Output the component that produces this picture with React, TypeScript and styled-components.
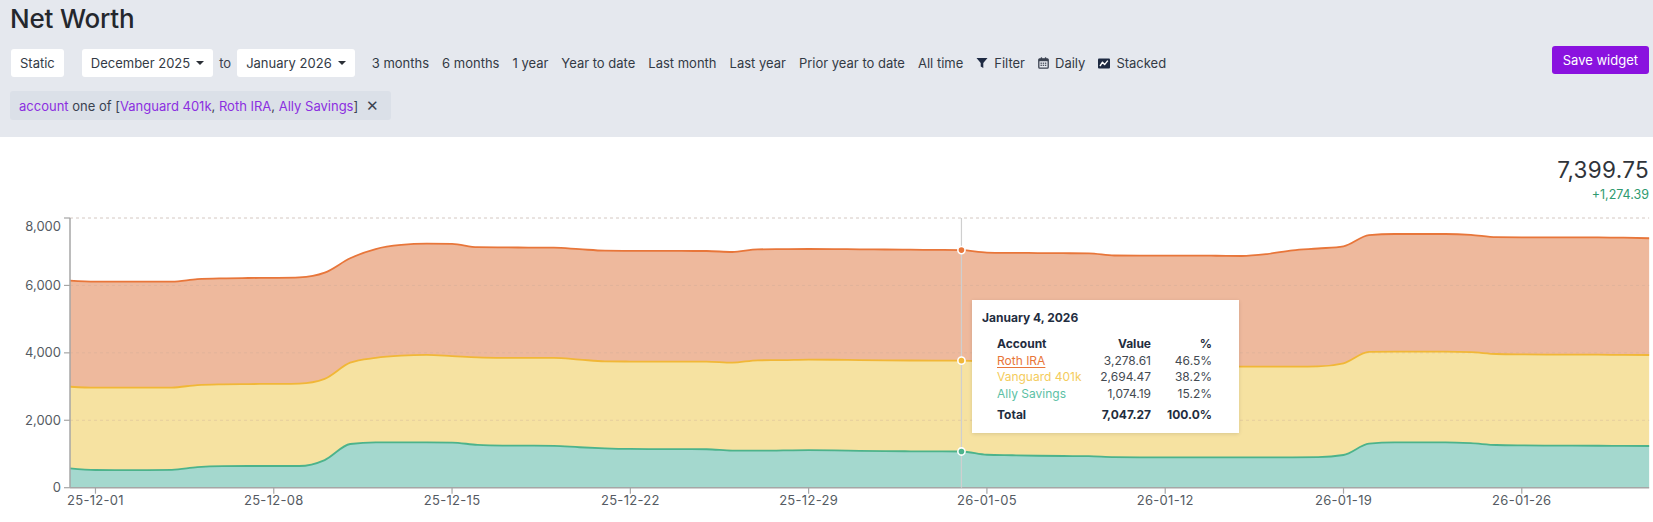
import React from "react";
import styled, { createGlobalStyle } from "styled-components";

const GlobalStyle = createGlobalStyle`
  html, body { margin: 0; padding: 0; background: #ffffff; }
  body { font-family: Inter, "Noto Sans", "Liberation Sans", sans-serif; color: #2f3540; }
  * { box-sizing: border-box; }
`;

const Page = styled.div`
  width: 1653px;
  overflow: hidden;
`;

const Header = styled.header`
  height: 137px;
  background: #e5e8ee;
  padding: 3px 4px 0 10px;
  display: flex;
  flex-direction: column;
`;

const Title = styled.h1`
  margin: 0;
  font-size: 26px;
  line-height: 32px;
  font-weight: 500;
  color: #24272d;
  letter-spacing: -0.2px;
`;

const Toolbar = styled.div`
  margin-top: 14px;
  height: 28px;
  display: flex;
  align-items: center;
  gap: 13px;
`;

const Button = styled.button<{ $pad?: number }>`
  height: 28px;
  border: none;
  border-radius: 3px;
  background: #ffffff;
  padding: 0 ${(p) => p.$pad ?? 9}px;
  font-family: inherit;
  font-size: 13px;
  color: #333a45;
  display: inline-flex;
  align-items: center;
  gap: 6px;
  cursor: pointer;
`;

const Caret = styled.span`
  width: 0;
  height: 0;
  border-left: 4px solid transparent;
  border-right: 4px solid transparent;
  border-top: 4px solid #2b2f36;
`;

const RangeGroup = styled.div`
  display: flex;
  align-items: center;
  gap: 6px;
  margin-left: 5px;
  margin-right: 4px;
`;

const Plain = styled.span`
  font-size: 13px;
  color: #3a4250;
  white-space: nowrap;
`;

const Link = styled.span`
  font-size: 13px;
  color: #333a45;
  white-space: nowrap;
  display: inline-flex;
  align-items: center;
  gap: 6px;
  cursor: pointer;
`;

const SaveButton = styled.button`
  margin-left: auto;
  margin-top: -6px;
  height: 28px;
  padding: 0 11px;
  border: none;
  border-radius: 3px;
  background: #8a12df;
  color: #ffffff;
  font-family: inherit;
  font-size: 13px;
  cursor: pointer;
`;

const Chip = styled.div`
  margin-top: 14px;
  align-self: flex-start;
  height: 29px;
  width: 381px;
  display: flex;
  align-items: center;
  padding: 0 9px 0 9px;
  background: #dbe0e8;
  border-radius: 3px;
  font-size: 13px;
  color: #3a4250;
  white-space: nowrap;
`;

const Purple = styled.span`
  color: #8b2fe0;
`;

const ChipClose = styled.span`
  margin-left: auto;
  font-size: 15px;
  color: #3a4250;
  padding-right: 3px;
`;

const ChartSection = styled.section`
  padding-top: 19px;
  background: #ffffff;
`;

const Summary = styled.div`
  display: flex;
  flex-direction: column;
  align-items: flex-end;
  padding-right: 4px;
`;

const BigValue = styled.div`
  font-size: 22.5px;
  line-height: 28px;
  color: #30343a;
  letter-spacing: 0.3px;
`;

const Change = styled.div`
  margin-top: 2px;
  font-size: 12.5px;
  line-height: 18px;
  color: #2f9a70;
`;

const ChartWrap = styled.div`
  position: relative;
  width: 1653px;
  height: 318px;
`;

const Tooltip = styled.div`
  position: absolute;
  left: 972px;
  top: 96px;
  width: 267px;
  height: 133px;
  background: #ffffff;
  box-shadow: 0 1px 4px rgba(0, 0, 0, 0.12);
  padding: 10px 10px 0 10px;
`;

const TipTitle = styled.div`
  font-size: 12px;
  line-height: 16px;
  font-weight: 700;
  color: #1f2d40;
`;

const TipGrid = styled.div`
  margin: 10px 0 0 15px;
  display: grid;
  grid-template-columns: 94px 60px 61px;
  font-size: 12px;
  line-height: 16.6px;
`;

const Cell = styled.span<{ $align?: "left" | "right"; $color?: string; $bold?: boolean; $gapTop?: boolean; $underline?: boolean }>`
  text-align: ${(p) => p.$align ?? "left"};
  color: ${(p) => p.$color ?? "#444a52"};
  font-weight: ${(p) => (p.$bold ? 700 : 400)};
  margin-top: ${(p) => (p.$gapTop ? "5px" : "0")};
  text-decoration: ${(p) => (p.$underline ? "underline" : "none")};
  text-underline-offset: 2px;
  white-space: nowrap;
`;

/* ---------- chart data ---------- */
const DATA: [number, number, number][] = [
  [6141, 2996, 575], [6111, 2967, 525], [6110, 2966, 524], [6110, 2966, 524], [6115, 2970, 530],
  [6185, 3045, 610], [6211, 3067, 640], [6220, 3075, 644], [6225, 3080, 644], [6240, 3090, 644],
  [6380, 3230, 820], [6805, 3708, 1296], [7080, 3850, 1347], [7200, 3915, 1347], [7238, 3937, 1346],
  [7232, 3905, 1340], [7135, 3868, 1270], [7128, 3852, 1250], [7124, 3848, 1247], [7120, 3848, 1240],
  [7075, 3800, 1200], [7031, 3749, 1168], [7026, 3742, 1150], [7024, 3740, 1145], [7022, 3740, 1142],
  [7021, 3739, 1140], [6992, 3709, 1100], [7071, 3779, 1098], [7076, 3785, 1105], [7080, 3800, 1115],
  [7078, 3795, 1110], [7070, 3785, 1095], [7066, 3778, 1085], [7060, 3773, 1080], [7054, 3770, 1076],
  [7047.27, 3768.66, 1074.19], [6975, 3742, 978], [6966, 3740, 962], [6961, 3740, 948], [6956, 3738, 940],
  [6952, 3720, 935], [6888, 3600, 905], [6884, 3592, 902], [6884, 3590, 902], [6884, 3590, 902],
  [6880, 3590, 902], [6873, 3590, 902], [6930, 3590, 902], [7040, 3592, 902], [7095, 3600, 905],
  [7160, 3690, 970], [7490, 4028, 1305], [7526, 4035, 1346], [7526, 4035, 1346], [7526, 4035, 1346],
  [7500, 4020, 1320], [7430, 3966, 1267], [7428, 3955, 1255], [7428, 3950, 1250], [7428, 3948, 1248],
  [7428, 3945, 1245], [7415, 3940, 1240], [7399.75, 3936, 1237],
];

const X0 = 70;
const DX = 25.47;
const Y0 = 487.7;
const KY = 269.7 / 8000;
const xOf = (d: number) => X0 + d * DX;
const yOf = (v: number) => Y0 - v * KY;

type Pt = [number, number];
type Seg = { c1: Pt; c2: Pt; to: Pt };

const sign = (n: number) => (n < 0 ? -1 : 1);

function monotoneSegs(pts: Pt[]): Seg[] {
  const n = pts.length;
  const t: number[] = new Array(n).fill(0);
  for (let i = 1; i < n - 1; i++) {
    const [x0, y0] = pts[i - 1];
    const [x1, y1] = pts[i];
    const [x2, y2] = pts[i + 1];
    const h0 = x1 - x0;
    const h1 = x2 - x1;
    const s0 = (y1 - y0) / h0;
    const s1 = (y2 - y1) / h1;
    const p = (s0 * h1 + s1 * h0) / (h0 + h1);
    t[i] = (sign(s0) + sign(s1)) * Math.min(Math.abs(s0), Math.abs(s1), 0.5 * Math.abs(p)) || 0;
  }
  const slope2 = (a: Pt, b: Pt, tt: number) => {
    const h = b[0] - a[0];
    return h ? (3 * (b[1] - a[1]) / h - tt) / 2 : tt;
  };
  t[0] = slope2(pts[0], pts[1], t[1]);
  t[n - 1] = slope2(pts[n - 2], pts[n - 1], t[n - 2]);
  const segs: Seg[] = [];
  for (let i = 0; i < n - 1; i++) {
    const [x0, y0] = pts[i];
    const [x1, y1] = pts[i + 1];
    const dx = (x1 - x0) / 3;
    segs.push({ c1: [x0 + dx, y0 + dx * t[i]], c2: [x1 - dx, y1 - dx * t[i + 1]], to: [x1, y1] });
  }
  return segs;
}

const f = (n: number) => n.toFixed(2);

function linePath(pts: Pt[]): string {
  const segs = monotoneSegs(pts);
  return `M${f(pts[0][0])},${f(pts[0][1])}` + segs.map((s) => `C${f(s.c1[0])},${f(s.c1[1])} ${f(s.c2[0])},${f(s.c2[1])} ${f(s.to[0])},${f(s.to[1])}`).join("");
}

function areaPath(top: Pt[], base: Pt[]): string {
  let d = linePath(top);
  const last = base[base.length - 1];
  d += `L${f(last[0])},${f(last[1])}`;
  const segs = monotoneSegs(base);
  for (let i = segs.length - 1; i >= 0; i--) {
    const s = segs[i];
    const from = base[i];
    d += `C${f(s.c2[0])},${f(s.c2[1])} ${f(s.c1[0])},${f(s.c1[1])} ${f(from[0])},${f(from[1])}`;
  }
  return d + "Z";
}

const totalPts: Pt[] = DATA.map((r, i) => [xOf(i), yOf(r[0])]);
const midPts: Pt[] = DATA.map((r, i) => [xOf(i), yOf(r[1])]);
const allyPts: Pt[] = DATA.map((r, i) => [xOf(i), yOf(r[2])]);
const zeroPts: Pt[] = DATA.map((_, i) => [xOf(i), Y0]);

const X_TICKS: [number, string][] = [
  [1, "25-12-01"], [8, "25-12-08"], [15, "25-12-15"], [22, "25-12-22"], [29, "25-12-29"],
  [36, "26-01-05"], [43, "26-01-12"], [50, "26-01-19"], [57, "26-01-26"],
];
const Y_TICKS = [0, 2000, 4000, 6000, 8000];

const COLORS = {
  roth: { fill: "#eeb99d", stroke: "#e8763a" },
  vanguard: { fill: "#f6e2a1", stroke: "#f1b737" },
  ally: { fill: "#a4d8ce", stroke: "#4cb38b" },
};

const HOVER = 35;

const Chart: React.FC = () => {
  const hx = xOf(HOVER);
  const right = xOf(DATA.length - 1);
  return (
    <svg width={1653} height={318} viewBox="0 0 1653 318" style={{ display: "block" }}>
      <g transform="translate(0,-204)">
        {Y_TICKS.filter((v) => v > 0).map((v) => (
          <line key={v} x1={X0} x2={right} y1={yOf(v)} y2={yOf(v)} stroke="#e2e2e2" strokeDasharray="3 3" />
        ))}
        <path d={areaPath(allyPts, zeroPts)} fill={COLORS.ally.fill} />
        <path d={areaPath(midPts, allyPts)} fill={COLORS.vanguard.fill} />
        <path d={areaPath(totalPts, midPts)} fill={COLORS.roth.fill} />
        {Y_TICKS.filter((v) => v > 0).map((v) => (
          <line key={`o${v}`} x1={X0} x2={right} y1={yOf(v)} y2={yOf(v)} stroke="#c9a896" strokeOpacity={0.35} strokeDasharray="3 3" />
        ))}
        <path d={linePath(allyPts)} fill="none" stroke={COLORS.ally.stroke} strokeWidth={1.8} />
        <path d={linePath(midPts)} fill="none" stroke={COLORS.vanguard.stroke} strokeWidth={1.8} />
        <path d={linePath(totalPts)} fill="none" stroke={COLORS.roth.stroke} strokeWidth={1.8} />

        <line x1={X0} x2={X0} y1={yOf(8000)} y2={Y0} stroke="#a6a6a6" strokeWidth={1.5} />
        <line x1={X0} x2={right} y1={Y0} y2={Y0} stroke="#a6a6a6" strokeWidth={1.5} />
        {Y_TICKS.map((v) => (
          <g key={`y${v}`}>
            <line x1={X0 - 6} x2={X0} y1={yOf(v)} y2={yOf(v)} stroke="#a6a6a6" strokeWidth={1.2} />
            <text x={61} y={yOf(v) + (v === 8000 ? 9 : 1)} textAnchor="end" dominantBaseline="middle" fontSize={13} fill="#555b63" fontFamily="Inter, sans-serif">
              {v.toLocaleString("en-US")}
            </text>
          </g>
        ))}
        {X_TICKS.map(([d, label]) => (
          <g key={label}>
            <line x1={xOf(d)} x2={xOf(d)} y1={Y0} y2={Y0 + 6} stroke="#a6a6a6" strokeWidth={1.2} />
            <text x={xOf(d)} y={501} textAnchor="middle" dominantBaseline="middle" fontSize={13} fill="#555b63" fontFamily="Inter, sans-serif" letterSpacing={0.3}>
              {label}
            </text>
          </g>
        ))}

        <line x1={hx} x2={hx} y1={yOf(8000)} y2={Y0} stroke="#cfcfcf" strokeWidth={1.2} />
        <circle cx={hx} cy={yOf(DATA[HOVER][0])} r={3.6} fill={COLORS.roth.stroke} stroke="#fff" strokeWidth={1.6} />
        <circle cx={hx} cy={yOf(DATA[HOVER][1])} r={3.6} fill={COLORS.vanguard.stroke} stroke="#fff" strokeWidth={1.6} />
        <circle cx={hx} cy={yOf(DATA[HOVER][2])} r={3.6} fill={COLORS.ally.stroke} stroke="#fff" strokeWidth={1.6} />
      </g>
    </svg>
  );
};

const FilterIcon = () => (
  <svg width="12" height="12" viewBox="0 0 12 12">
    <path d="M0.5 1 H11.5 L7.3 6 V11 L4.7 9.6 V6 Z" fill="#1e2a42" />
  </svg>
);

const CalendarIcon = () => (
  <svg width="11" height="12" viewBox="0 0 11 12">
    <rect x="0.8" y="1.8" width="9.4" height="9.4" rx="1" fill="none" stroke="#3b4250" strokeWidth="1.3" />
    <rect x="0.8" y="1.8" width="9.4" height="2.4" fill="#3b4250" />
    <rect x="2.8" y="0.3" width="1.3" height="2.5" fill="#3b4250" />
    <rect x="6.9" y="0.3" width="1.3" height="2.5" fill="#3b4250" />
    {[5.6, 7.7].map((y) =>
      [2.5, 4.7, 6.9].map((x) => <rect key={`${x}-${y}`} x={x} y={y} width="1.4" height="1.2" fill="#3b4250" />)
    )}
  </svg>
);

const StackedIcon = () => (
  <svg width="12" height="11" viewBox="0 0 12 11">
    <rect x="0" y="0.5" width="12" height="10" rx="1" fill="#1e2a42" />
    <path d="M2 8 L4.5 4.2 L6.6 6.6 L9.8 2.6" fill="none" stroke="#ffffff" strokeWidth="1.4" strokeLinejoin="round" />
  </svg>
);

const App: React.FC = () => (
  <Page>
    <GlobalStyle />
    <Header>
      <Title>Net Worth</Title>
      <Toolbar>
        <Button $pad={9} style={{ marginLeft: 1 }}>Static</Button>
        <RangeGroup>
          <Button>
            December 2025 <Caret />
          </Button>
          <Plain>to</Plain>
          <Button>
            January 2026 <Caret />
          </Button>
        </RangeGroup>
        <Link>3 months</Link>
        <Link>6 months</Link>
        <Link>1 year</Link>
        <Link>Year to date</Link>
        <Link>Last month</Link>
        <Link>Last year</Link>
        <Link>Prior year to date</Link>
        <Link>All time</Link>
        <Link>
          <FilterIcon /> Filter
        </Link>
        <Link>
          <CalendarIcon /> Daily
        </Link>
        <Link>
          <StackedIcon /> Stacked
        </Link>
        <SaveButton>Save widget</SaveButton>
      </Toolbar>
      <Chip>
        <Purple>account</Purple>&nbsp;one of [<Purple>Vanguard 401k</Purple>,&nbsp;<Purple>Roth IRA</Purple>,&nbsp;
        <Purple>Ally Savings</Purple>]
        <ChipClose>✕</ChipClose>
      </Chip>
    </Header>
    <ChartSection>
      <Summary>
        <BigValue>7,399.75</BigValue>
        <Change>+1,274.39</Change>
      </Summary>
      <ChartWrap>
        <Chart />
        <Tooltip>
          <TipTitle>January 4, 2026</TipTitle>
          <TipGrid>
            <Cell $bold $color="#1f2d40">Account</Cell>
            <Cell $bold $color="#1f2d40" $align="right">Value</Cell>
            <Cell $bold $color="#1f2d40" $align="right">%</Cell>
            <Cell $color="#e8763a" $underline>Roth IRA</Cell>
            <Cell $align="right">3,278.61</Cell>
            <Cell $align="right">46.5%</Cell>
            <Cell $color="#f4cc5c">Vanguard 401k</Cell>
            <Cell $align="right">2,694.47</Cell>
            <Cell $align="right">38.2%</Cell>
            <Cell $color="#5cbfa5">Ally Savings</Cell>
            <Cell $align="right">1,074.19</Cell>
            <Cell $align="right">15.2%</Cell>
            <Cell $bold $gapTop $color="#1f2d40">Total</Cell>
            <Cell $bold $gapTop $color="#1f2d40" $align="right">7,047.27</Cell>
            <Cell $bold $gapTop $color="#1f2d40" $align="right">100.0%</Cell>
          </TipGrid>
        </Tooltip>
      </ChartWrap>
    </ChartSection>
  </Page>
);

export default App;
